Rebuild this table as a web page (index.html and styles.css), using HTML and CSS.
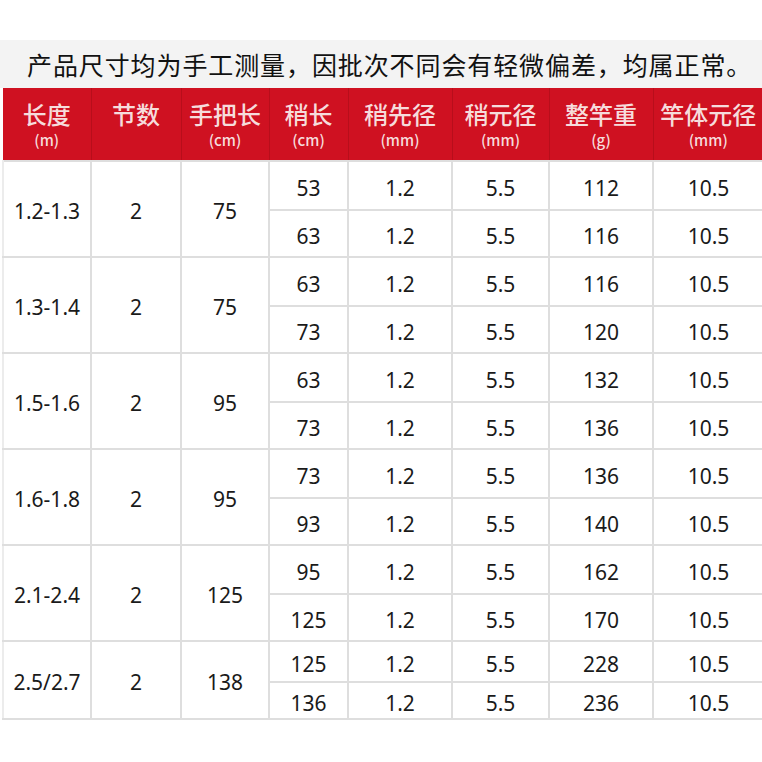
FILE: index.html
```html
<!DOCTYPE html>
<html lang="zh-CN">
<head>
<meta charset="utf-8">
<title>产品尺寸</title>
<link rel="stylesheet" href="styles.css">
</head>
<body>
<div class="note">产品尺寸均为手工测量，因批次不同会有轻微偏差，均属正常。</div>
<table class="spec">
  <colgroup>
    <col class="c1"><col class="c2"><col class="c3"><col class="c4"><col class="c5"><col class="c6"><col class="c7"><col class="c8">
  </colgroup>
  <thead>
    <tr>
      <th><span class="h">长度</span><span class="u">(m)</span></th>
      <th><span class="h">节数</span><span class="u">&nbsp;</span></th>
      <th><span class="h">手把长</span><span class="u">(cm)</span></th>
      <th><span class="h">稍长</span><span class="u">(cm)</span></th>
      <th><span class="h">稍先径</span><span class="u">(mm)</span></th>
      <th><span class="h">稍元径</span><span class="u">(mm)</span></th>
      <th><span class="h">整竿重</span><span class="u">(g)</span></th>
      <th><span class="h">竿体元径</span><span class="u">(mm)</span></th>
    </tr>
  </thead>
  <tbody>
    <tr class="ra"><td rowspan="2">1.2-1.3</td><td rowspan="2">2</td><td rowspan="2">75</td><td>53</td><td>1.2</td><td>5.5</td><td>112</td><td>10.5</td></tr>
    <tr class="rb"><td>63</td><td>1.2</td><td>5.5</td><td>116</td><td>10.5</td></tr>
    <tr class="ra"><td rowspan="2">1.3-1.4</td><td rowspan="2">2</td><td rowspan="2">75</td><td>63</td><td>1.2</td><td>5.5</td><td>116</td><td>10.5</td></tr>
    <tr class="rb"><td>73</td><td>1.2</td><td>5.5</td><td>120</td><td>10.5</td></tr>
    <tr class="ra"><td rowspan="2">1.5-1.6</td><td rowspan="2">2</td><td rowspan="2">95</td><td>63</td><td>1.2</td><td>5.5</td><td>132</td><td>10.5</td></tr>
    <tr class="rb"><td>73</td><td>1.2</td><td>5.5</td><td>136</td><td>10.5</td></tr>
    <tr class="ra"><td rowspan="2">1.6-1.8</td><td rowspan="2">2</td><td rowspan="2">95</td><td>73</td><td>1.2</td><td>5.5</td><td>136</td><td>10.5</td></tr>
    <tr class="rb"><td>93</td><td>1.2</td><td>5.5</td><td>140</td><td>10.5</td></tr>
    <tr class="ra"><td rowspan="2">2.1-2.4</td><td rowspan="2">2</td><td rowspan="2">125</td><td>95</td><td>1.2</td><td>5.5</td><td>162</td><td>10.5</td></tr>
    <tr class="rb"><td>125</td><td>1.2</td><td>5.5</td><td>170</td><td>10.5</td></tr>
    <tr class="rc"><td rowspan="2">2.5/2.7</td><td rowspan="2">2</td><td rowspan="2">138</td><td>125</td><td>1.2</td><td>5.5</td><td>228</td><td>10.5</td></tr>
    <tr class="rd"><td>136</td><td>1.2</td><td>5.5</td><td>236</td><td>10.5</td></tr>
  </tbody>
</table>
</body>
</html>
```

FILE: styles.css
```css
html, body {
  margin: 0;
  padding: 0;
  background: #ffffff;
}

body {
  width: 762px;
  height: 762px;
  overflow: hidden;
  font-family: "Noto Sans", "Noto Sans CJK SC", sans-serif;
}

.note {
  margin-top: 40px;
  height: 48px;
  background: #f3f3f3;
  padding-left: 27px;
  font-family: "Noto Sans CJK SC", sans-serif;
  font-size: 25px;
  letter-spacing: 0.9px;
  line-height: 48px;
  color: #111111;
  white-space: nowrap;
}

.spec {
  margin-left: 2px;
  width: 760px;
  border-collapse: collapse;
  table-layout: fixed;
}

.c1 { width: 88px; }
.c2 { width: 90px; }
.c3 { width: 88px; }
.c4 { width: 79px; }
.c5 { width: 104px; }
.c6 { width: 97px; }
.c7 { width: 104px; }
.c8 { width: 110px; }

.spec th {
  background: #cf1121;
  color: #f6dcdc;
  height: 72px;
  padding: 0;
  border-left: 1px solid #b80e1b;
  vertical-align: top;
  font-weight: normal;
}

.spec th:first-child { border-left: none; }

.h {
  display: block;
  margin-top: 11px;
  font-family: "Noto Sans CJK SC", sans-serif;
  font-size: 24px;
  font-weight: 500;
  line-height: 30px;
}

.u {
  display: block;
  margin-top: 2px;
  font-family: "Noto Sans CJK SC", sans-serif;
  font-size: 15px;
  font-weight: 500;
  line-height: 18px;
}

.spec td {
  border: 2px solid #dedede;
  padding: 4px 0 0 0;
  text-align: center;
  vertical-align: middle;
  font-size: 21px;
  color: #1a1a1a;
}

.spec td:first-child { border-left-color: #ececec; }
.spec td:last-child { border-right: none; }

.ra { height: 49px; }
.rb { height: 47px; }
.rc { height: 41px; }
.rd { height: 37px; }
```
